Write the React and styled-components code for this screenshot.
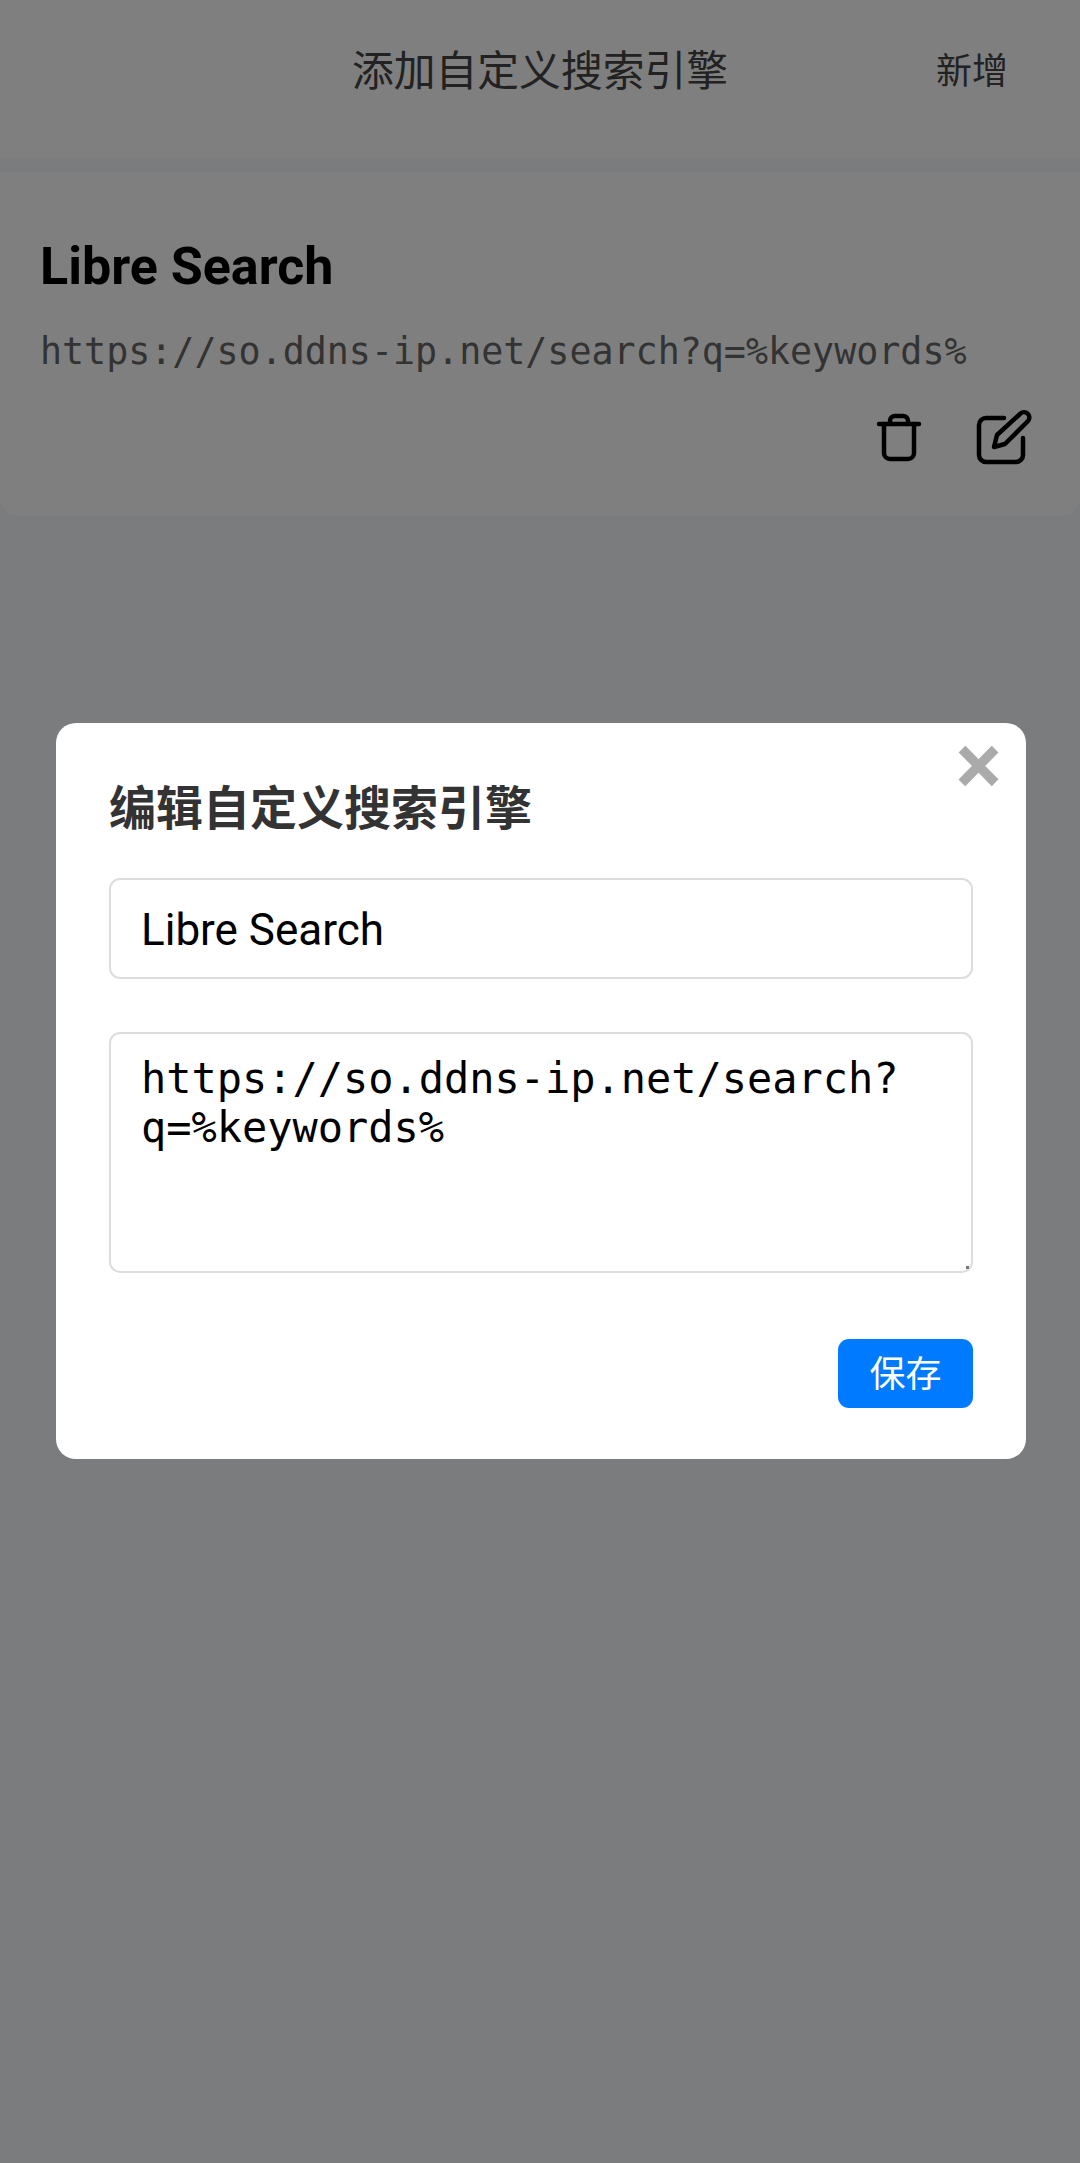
import React from 'react';
import styled, { createGlobalStyle } from 'styled-components';

const cjk = '"Noto Sans CJK SC"';
const sans = `Roboto, ${cjk}, sans-serif`;
const mono = `"DejaVu Sans Mono", ${cjk}, monospace`;

const GlobalStyle = createGlobalStyle`
  * { box-sizing: border-box; }
  html, body { margin: 0; padding: 0; }
  body { background: #f6f8fc; font-family: ${sans}; }
`;

const Page = styled.div`
  min-height: 2163px;
`;

const Header = styled.header`
  height: 158px;
  background: #fff;
  display: grid;
  grid-template-columns: 1fr auto 1fr;
  align-items: center;
  padding: 0 72px 22px;
  margin-bottom: 14px;
`;

const HeaderTitle = styled.h1`
  grid-column: 2;
  margin: 0;
  font-size: 41.8px;
  font-weight: 400;
  color: #444;
`;

const HeaderAction = styled.span`
  justify-self: end;
  font-size: 36px;
  color: #444;
`;

const Card = styled.section`
  height: 344px;
  background: #fff;
  border-radius: 0 0 18px 18px;
  padding: 67px 48px 48px 40px;
`;

const EngineName = styled.h2`
  margin: 0;
  font-size: 52px;
  line-height: 56px;
  font-weight: 700;
  color: #000;
`;

const EngineUrl = styled.p`
  margin: 34px 0 0;
  font-family: ${mono};
  font-size: 36.65px;
  line-height: 46px;
  color: #666;
`;

const Actions = styled.div`
  display: flex;
  justify-content: flex-end;
  gap: 42px;
  margin-top: 33px;
`;

const Icon = styled.svg`
  display: block;
  width: 60px;
  height: 60px;
  fill: none;
  stroke: #000;
  stroke-width: 4.5;
  stroke-linecap: round;
  stroke-linejoin: round;
`;

const Overlay = styled.div`
  position: fixed;
  inset: 0;
  background: rgba(0, 0, 0, 0.5);
  display: flex;
  justify-content: center;
  align-items: flex-start;
  padding: 723px 0 0 2px;
`;

const Modal = styled.div`
  position: relative;
  width: 970px;
  height: 736px;
  background: #fff;
  border-radius: 20px;
  padding: 50px 53px;
  display: flex;
  flex-direction: column;
`;

const CloseButton = styled.span`
  position: absolute;
  top: 0;
  right: 25px;
  font-family: "Liberation Sans", sans-serif;
  font-size: 77px;
  line-height: 84px;
  font-weight: 700;
  color: #aaa;
  -webkit-text-stroke: 1px #aaa;
`;

const ModalTitle = styled.h3`
  margin: 0 0 39px;
  padding-top: 5px;
  font-size: 47px;
  line-height: 61px;
  font-weight: 700;
  color: #333;
`;

const TextInput = styled.input`
  display: block;
  width: 100%;
  height: 101px;
  margin-bottom: 53px;
  padding: 3px 30px 0;
  border: 2px solid #ddd;
  border-radius: 11px;
  outline: none;
  background: #fff;
  font-family: ${sans};
  font-size: 44px;
  color: #000;
`;

const TextArea = styled.textarea`
  display: block;
  width: 100%;
  height: 241px;
  margin-bottom: 66px;
  padding: 20px 30px;
  border: 2px solid #ddd;
  border-radius: 11px;
  outline: none;
  background: #fff;
  font-family: ${mono};
  font-size: 41.95px;
  line-height: 49px;
  color: #000;

  &::-webkit-resizer {
    background: linear-gradient(#777, #777) no-repeat right 2px bottom 2px / 3px 3px;
  }
`;

const SaveRow = styled.div`
  display: flex;
  justify-content: flex-end;
`;

const SaveButton = styled.button`
  width: 135px;
  height: 69px;
  padding: 0 0 6px;
  border: none;
  border-radius: 11px;
  background: #007bff;
  font-family: ${sans};
  font-size: 36px;
  color: #fff;
`;

const App = () => {
  const url = 'https://so.ddns-ip.net/search?q=%keywords%';

  return (
    <Page>
      <GlobalStyle />
      <Header>
        <HeaderTitle>添加自定义搜索引擎</HeaderTitle>
        <HeaderAction>新增</HeaderAction>
      </Header>

      <Card>
        <EngineName>Libre Search</EngineName>
        <EngineUrl>{url}</EngineUrl>
        <Actions>
          <Icon viewBox="0 0 60 60">
            <path d="M9 16H49" />
            <path d="M20 16V13a5 5 0 0 1 5-5h8a5 5 0 0 1 5 5v3" />
            <path d="M14 16V45a6 6 0 0 0 6 6H38a6 6 0 0 0 6-6V16" />
          </Icon>
          <Icon viewBox="0 0 60 60">
            <path d="M32 10H14a7 7 0 0 0-7 7V47a7 7 0 0 0 7 7H44a7 7 0 0 0 7-7V30" />
            <path d="M22 39L25 27L48 6a5 5 0 0 1 8 7L33 36Z" />
          </Icon>
        </Actions>
      </Card>

      <Overlay>
        <Modal>
          <CloseButton>×</CloseButton>
          <ModalTitle>编辑自定义搜索引擎</ModalTitle>
          <TextInput readOnly value="Libre Search" />
          <TextArea readOnly value={url} />
          <SaveRow>
            <SaveButton>保存</SaveButton>
          </SaveRow>
        </Modal>
      </Overlay>
    </Page>
  );
};

export default App;
